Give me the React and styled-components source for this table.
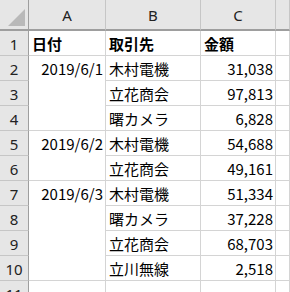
import React from "react";
import styled, { createGlobalStyle } from "styled-components";

const Global = createGlobalStyle`
  html, body { margin: 0; padding: 0; background: #fff; overflow: hidden; }
  body { font-family: "Noto Sans CJK JP", "Noto Sans", sans-serif; }
`;

const Sheet = styled.div`
  display: grid;
  grid-template-columns: 29px 77px 95px 75px 1fr;
  grid-template-rows: 31px repeat(11, 25px);
  width: 290px;
  height: 292px;
  overflow: hidden;
  font-size: 15px;
  color: #000;
`;

const Corner = styled.div`
  background: #e6e6e6;
  border-right: 1px solid #9e9e9e;
  border-bottom: 2px solid #9e9e9e;
  box-sizing: border-box;
  display: flex;
  align-items: flex-end;
  justify-content: flex-end;
  padding: 0 3px 3px 0;
`;

const ColHead = styled.div`
  background: #e6e6e6;
  border-right: 1px solid #c6c6c6;
  border-bottom: 2px solid #9e9e9e;
  box-sizing: border-box;
  display: flex;
  align-items: center;
  justify-content: center;
  color: #222;
  font-family: "Noto Sans", "Liberation Sans", sans-serif;
  font-size: 15px;
  padding-top: 1px;
`;

const RowHead = styled.div`
  grid-column: 1;
  background: #e6e6e6;
  border-right: 1px solid #9e9e9e;
  border-bottom: 1px solid #c6c6c6;
  box-sizing: border-box;
  display: flex;
  align-items: center;
  justify-content: center;
  color: #222;
  font-family: "Noto Sans", "Liberation Sans", sans-serif;
  font-size: 15px;
  padding-top: 2px;
`;

const Cell = styled.div`
  grid-column: ${(p) => p.$col};
  grid-row: ${(p) => (p.$span ? `span ${p.$span}` : "auto")};
  border-right: 1px solid #d4d4d4;
  border-bottom: 1px solid #d4d4d4;
  box-sizing: border-box;
  display: flex;
  align-items: ${(p) => (p.$span ? "flex-start" : "center")};
  justify-content: ${(p) => (p.$right ? "flex-end" : "flex-start")};
  padding: 2px 2px 0 3px;
  font-weight: ${(p) => (p.$bold ? 700 : 400)};
  white-space: nowrap;
  line-height: 22px;
  overflow: hidden;
`;

const Triangle = () => (
  <svg width="17" height="17" viewBox="0 0 17 17">
    <polygon points="17,0 17,17 0,17" fill="#b9b9b9" />
  </svg>
);

const rows = [
  { n: 1, date: { text: "日付", span: 1, bold: true }, b: "取引先", c: "金額", header: true },
  { n: 2, date: { text: "2019/6/1", span: 3 }, b: "木村電機", c: "31,038" },
  { n: 3, b: "立花商会", c: "97,813" },
  { n: 4, b: "曙カメラ", c: "6,828" },
  { n: 5, date: { text: "2019/6/2", span: 2 }, b: "木村電機", c: "54,688" },
  { n: 6, b: "立花商会", c: "49,161" },
  { n: 7, date: { text: "2019/6/3", span: 4 }, b: "木村電機", c: "51,334" },
  { n: 8, b: "曙カメラ", c: "37,228" },
  { n: 9, b: "立花商会", c: "68,703" },
  { n: 10, b: "立川無線", c: "2,518" },
  { n: 11, date: { text: "", span: 1 }, b: "", c: "" },
];

export default function App() {
  return (
    <>
      <Global />
      <Sheet>
        <Corner>
          <Triangle />
        </Corner>
        <ColHead>A</ColHead>
        <ColHead>B</ColHead>
        <ColHead>C</ColHead>
        <ColHead />
        {rows.map((r) => (
          <React.Fragment key={r.n}>
            <RowHead>{r.n}</RowHead>
            {r.date && (
              <Cell
                $col={2}
                $span={r.date.span > 1 ? r.date.span : undefined}
                $right={!r.header}
                $bold={r.date.bold}
              >
                {r.date.text}
              </Cell>
            )}
            <Cell $col={3} $bold={r.header}>{r.b}</Cell>
            <Cell $col={4} $right={!r.header} $bold={r.header}>{r.c}</Cell>
            <Cell $col={5} />
          </React.Fragment>
        ))}
      </Sheet>
    </>
  );
}
